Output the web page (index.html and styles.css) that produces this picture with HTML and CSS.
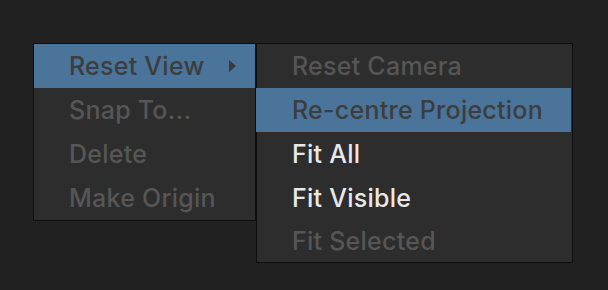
FILE: index.html
```html
<!DOCTYPE html>
<html>
<head>
    <meta charset="UTF-8" />
    <title>Context menu</title>
    <link rel="stylesheet" href="styles.css">
</head>

<body>
    <div class="stage">
        <ul class="menu main">
            <li class="item hover">
                <span>Reset View</span>
                <svg class="arrow" width="7" height="12" viewBox="0 0 7 12"><path d="M0 0 L7 6 L0 12 Z" fill="#3b3b3b"/></svg>
            </li>
            <li class="item off">Snap To...</li>
            <li class="item off">Delete</li>
            <li class="item off">Make Origin</li>
        </ul>
        <ul class="menu sub">
            <li class="item off">Reset Camera</li>
            <li class="item hover">Re-centre Projection</li>
            <li class="item">Fit All</li>
            <li class="item">Fit Visible</li>
            <li class="item off">Fit Selected</li>
        </ul>
    </div>
</body>
</html>
```

FILE: styles.css
```css
*{
    margin: 0;
    padding: 0;
    list-style: none;
    box-sizing: border-box;
}
body{
    background-color: #212121;
    font-family: Inter, "Noto Sans", sans-serif;
}
.stage{
    display: flex;
    align-items: flex-start;
    padding: 43px 0 0 33px;
}
.menu{
    background-color: #2d2d2d;
    border: 1px solid #0e0e0e;
}
.main{
    width: 223px;
}
.sub{
    width: 317px;
    padding-right: 1px;
}
.item{
    display: flex;
    align-items: center;
    justify-content: space-between;
    height: 44px;
    padding: 0 19px 0 35px;
    font-size: 25px;
    font-weight: 500;
    letter-spacing: 0.25px;
    color: #e8e8e8;
    white-space: nowrap;
}
.sub .item:last-child{
    height: 42px;
}
.item.off{
    color: #565656;
}
.item.hover{
    background-color: #4a7499;
    color: #3d3d3d;
}
.sub .item.hover{
    margin-left: -1px;
    padding-left: 36px;
}
.arrow{
    display: block;
}
```
